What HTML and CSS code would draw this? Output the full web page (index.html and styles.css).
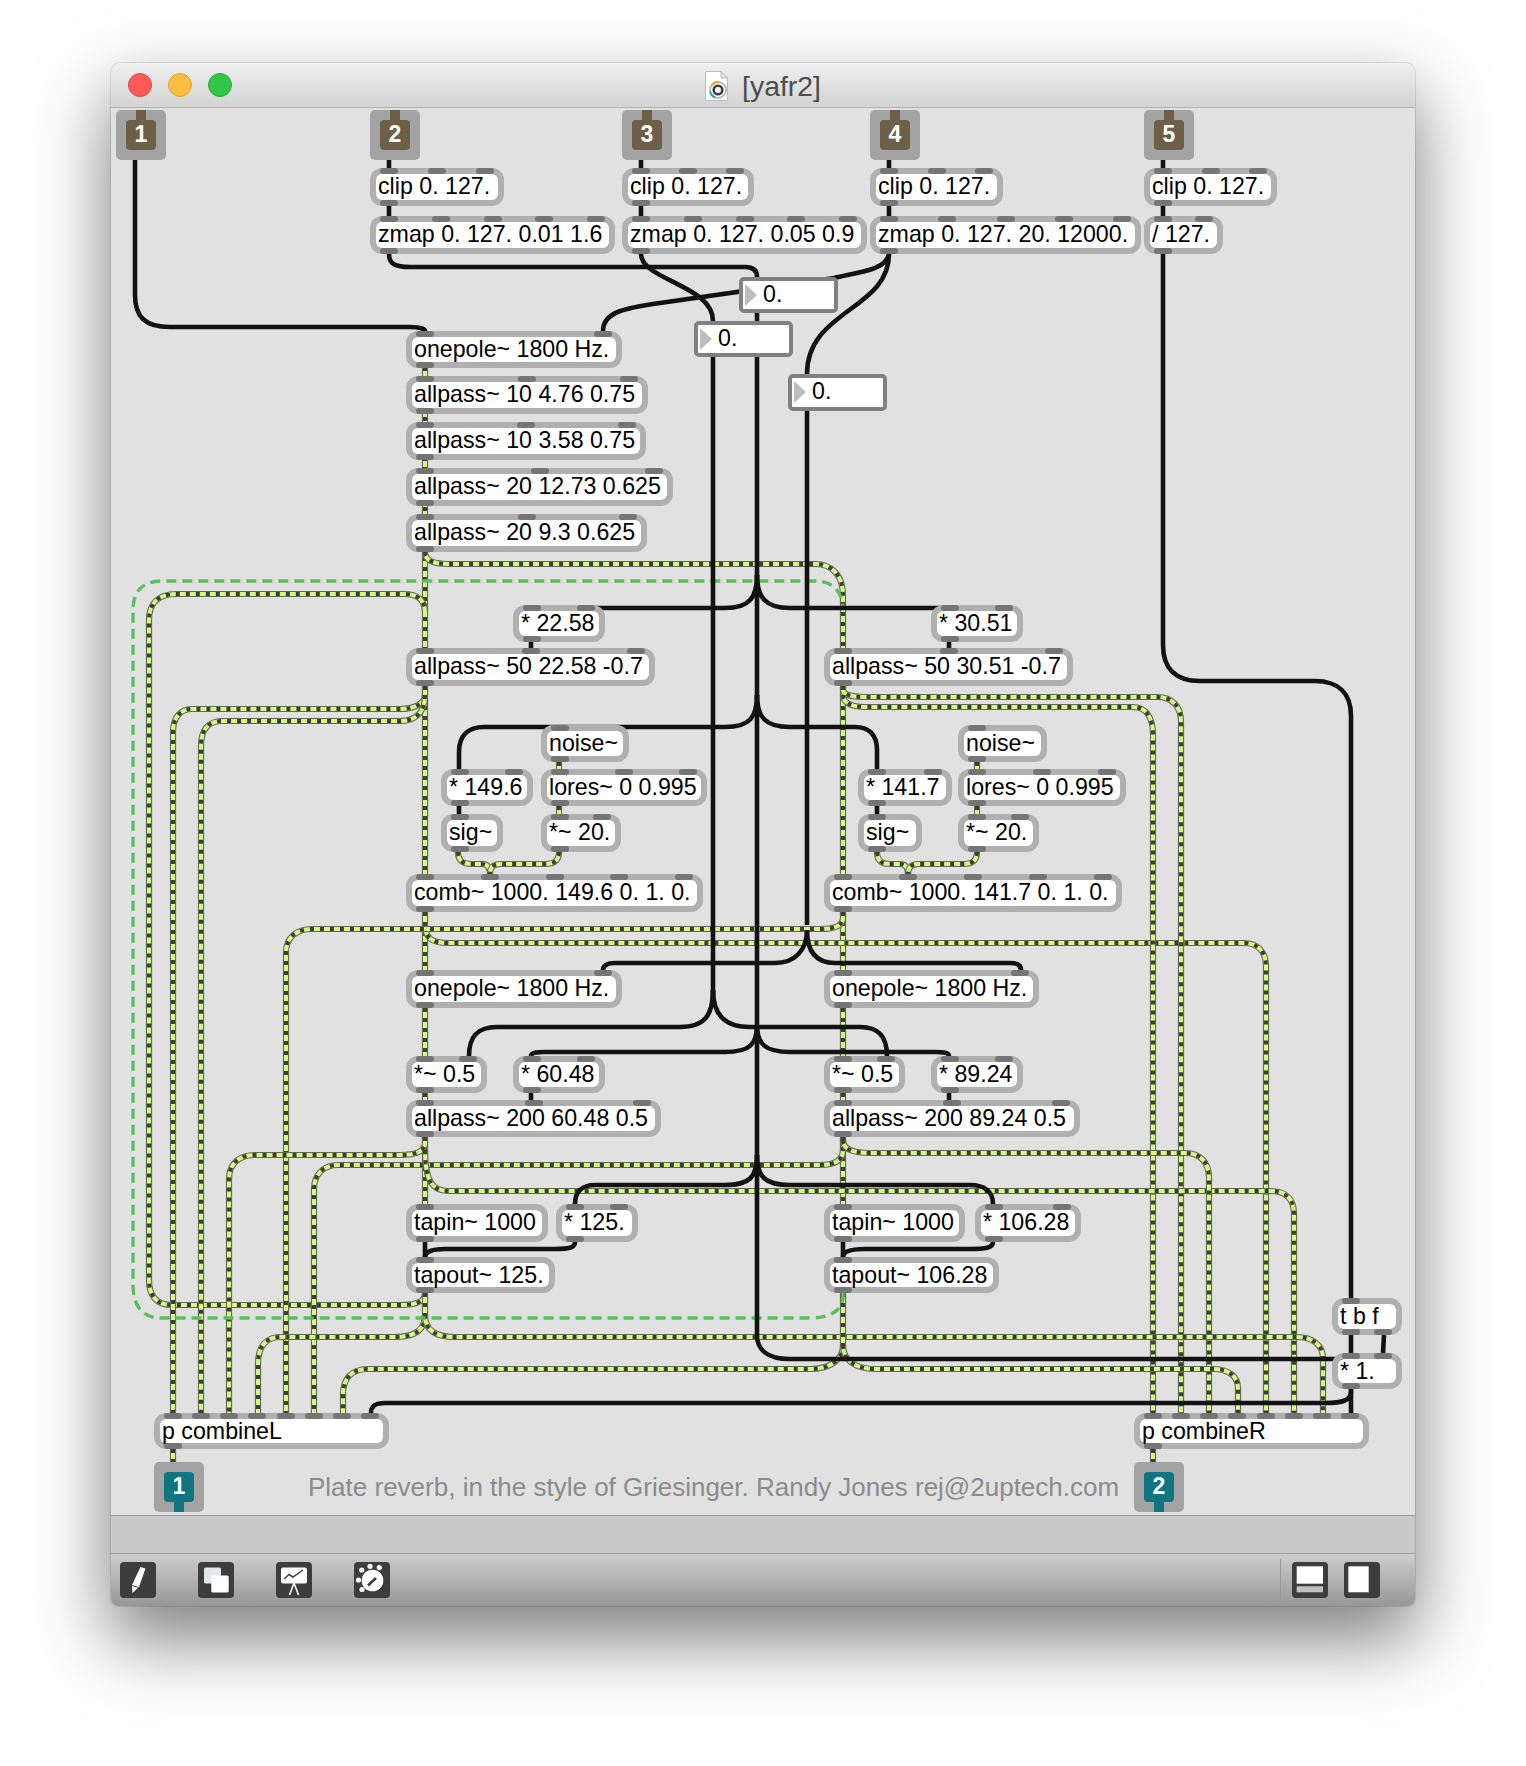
FILE: index.html
```html
<!DOCTYPE html>
<html lang="en">
<head>
    <meta charset="UTF-8">
    <title>[yafr2]</title>
    <link rel="stylesheet" href="styles.css">
</head>
<body>
    <div class="window">
        <div class="titlebar">
            <div class="lights">
                <span class="light red"></span>
                <span class="light yellow"></span>
                <span class="light green"></span>
            </div>
            <div class="title">
                <svg class="doc-icon" viewBox="0 0 23 30">
                    <path d="M.5.5H16L22.5 7V29.5H.5Z" fill="#fff" stroke="#bdbdbd"/>
                    <path d="M16 .5V7H22.5Z" fill="#e2e2e2" stroke="#bdbdbd"/>
                    <circle cx="13" cy="19" r="8" fill="none" stroke="#b8b8b8" stroke-width="1.800"/>
                    <path d="M6.500 14.500A8 8 0 0 1 14 11" fill="none" stroke="#eaa633" stroke-width="2"/>
                    <path d="M5.200 20.500A8 8 0 0 0 10 26.500" fill="none" stroke="#2f9fd0" stroke-width="2"/>
                    <circle cx="13" cy="19" r="4.300" fill="none" stroke="#3f3f3f" stroke-width="2.600"/>
                </svg>
                <span>[yafr2]</span>
            </div>
        </div>

        <div class="patcher" id="patcher">
            <svg class="cords" id="cords" viewBox="111 108 1304 1407"></svg>
            <div class="comment">Plate reverb, in the style of Griesinger. Randy Jones rej@2uptech.com</div>
        </div>

        <div class="statusbar"></div>

        <div class="toolbar">
            <svg class="tool" viewBox="0 0 36 36">
                <rect width="36" height="36" rx="4" fill="#3d3d3d"/>
                <path d="M20.500 5L25.500 6.500 19 25 12.500 31 12 23Z" fill="#fff"/>
                <path d="M12.300 23.500L18.800 25.500" stroke="#3d3d3d" stroke-width="1"/>
            </svg>
            <svg class="tool" viewBox="0 0 36 36">
                <rect width="36" height="36" rx="4" fill="#3d3d3d"/>
                <rect x="6" y="5.500" width="17" height="16" rx="1.500" fill="#e3e9e9"/>
                <rect x="13.300" y="13.500" width="17.400" height="17" rx="1.500" fill="#fff"/>
            </svg>
            <svg class="tool" viewBox="0 0 36 36">
                <rect width="36" height="36" rx="4" fill="#3d3d3d"/>
                <rect x="5" y="5.500" width="26" height="16" rx="2" fill="#fff"/>
                <path d="M8 17L13 12.500 17 15 27 8" fill="none" stroke="#3d3d3d" stroke-width="1.500"/>
                <path d="M18 21L13.500 33M18 21L22.500 33" stroke="#fff" stroke-width="1.600"/>
            </svg>
            <svg class="tool" viewBox="0 0 36 36">
                <rect width="36" height="36" rx="4" fill="#3d3d3d"/>
                <circle cx="18.500" cy="18.500" r="10.800" fill="#fff"/>
                <path d="M14 23.500L22 16" stroke="#3d3d3d" stroke-width="2.600"/>
                <circle cx="7.700" cy="8" r="2.600" fill="#fff"/>
                <circle cx="16" cy="4.300" r="2.600" fill="#fff"/>
                <circle cx="25.300" cy="5.600" r="2.600" fill="#fff"/>
                <circle cx="4.500" cy="18" r="2.600" fill="#fff"/>
                <circle cx="8" cy="27.500" r="2.600" fill="#fff"/>
            </svg>
            <span class="tool-sep"></span>
            <svg class="tool" viewBox="0 0 36 36">
                <rect width="36" height="36" rx="4" fill="#3d3d3d"/>
                <rect x="4.700" y="4.300" width="26.300" height="17.400" fill="#fff"/>
                <rect x="4.700" y="24.300" width="26.300" height="6" fill="#c2c2c2"/>
            </svg>
            <svg class="tool tool-last" viewBox="0 0 36 36">
                <rect width="36" height="36" rx="4" fill="#3d3d3d"/>
                <rect x="4.300" y="4.300" width="20.400" height="26" fill="#fff"/>
            </svg>
        </div>
    </div>

    <script src="patch.js"></script>
</body>
</html>
```

FILE: styles.css
```css
body {
    margin: 0;
    background-color: #ffffff;
    font-family: "Liberation Sans", Arial, sans-serif;
    color: #000000;
    height: 1766px;
    padding-top: 63px;
    padding-left: 111px;
    box-sizing: border-box;
    overflow: hidden;
}

.window {
    width: 1304px;
    height: 1543px;
    display: flex;
    flex-direction: column;
    border-radius: 10px 10px 7px 7px;
    box-shadow: 0 0 0 1px rgba(0, 0, 0, 0.1), 0 32px 72px 2px rgba(0, 0, 0, 0.5);
    overflow: hidden;
}

.titlebar {
    height: 45px;
    flex: none;
    box-sizing: border-box;
    display: grid;
    grid-template-columns: 1fr auto 1fr;
    align-items: center;
    background: linear-gradient(#f0f0f0, #d3d3d3);
    border-bottom: 1px solid #b1b1b1;
}

.lights {
    display: flex;
    gap: 16px;
    padding-left: 17px;
}

.light {
    width: 24px;
    height: 24px;
    border-radius: 50%;
    box-sizing: border-box;
}

.light.red { background-color: #fc5b57; border: 1px solid #e2463f; }
.light.yellow { background-color: #fdbc40; border: 1px solid #e0a028; }
.light.green { background-color: #33c748; border: 1px solid #27aa35; }

.title {
    display: flex;
    align-items: center;
    gap: 14px;
    font-size: 28.4px;
    color: #4c4c4c;
    padding-top: 2px;
}

.doc-icon {
    width: 23px;
    height: 30px;
}

.patcher {
    flex: none;
    height: 1407px;
    position: relative;
    background-color: #e1e1e1;
}

.cords {
    position: absolute;
    left: 0;
    top: 0;
    width: 1304px;
    height: 1407px;
    fill: none;
    stroke-linecap: butt;
}

.cord-black { stroke: #121212; stroke-width: 4.6; }
.sig-edge { stroke: #626b52; stroke-width: 6.2; }
.sig-fill { stroke: #d6f68a; stroke-width: 4; }
.sig-dash { stroke: #3d3f2e; stroke-width: 4; stroke-dasharray: 4 6; }
.cord-feedback { stroke: #58bf5c; stroke-width: 3.4; stroke-dasharray: 10 6; }

.obj {
    position: absolute;
    box-sizing: border-box;
    background-color: #ffffff;
    background-clip: padding-box;
    border: 6px solid #b0b0b0;
    border-radius: 12px;
    font-size: 23.2px;
    line-height: 24px;
    padding-left: 2px;
    white-space: nowrap;
}

.port {
    position: absolute;
    width: 18px;
    height: 6px;
    border-radius: 3px;
    background-color: #757575;
}

.port.in { top: -6px; }
.port.out { bottom: -6px; }

.num {
    position: absolute;
    box-sizing: border-box;
    background-color: #ffffff;
    border: 4px solid #808080;
    border-radius: 5px;
    font-size: 23.2px;
    line-height: 27px;
    padding-left: 20px;
}

.num::before {
    content: "";
    position: absolute;
    left: 2px;
    top: 3px;
    border-left: 12px solid #bdbdbd;
    border-top: 11px solid transparent;
    border-bottom: 11px solid transparent;
}

.io {
    position: absolute;
    box-sizing: border-box;
    width: 50px;
    height: 50px;
    border-radius: 5px;
    background-color: #a3a3a3;
    display: flex;
    align-items: center;
    justify-content: center;
}

.io-num {
    width: 30px;
    height: 30px;
    border-radius: 4px;
    position: relative;
    color: #ffffff;
    font-size: 23px;
    font-weight: bold;
    line-height: 29px;
    text-align: center;
}

.io-num::after {
    content: "";
    position: absolute;
    left: 10px;
    width: 10px;
    height: 10px;
    background-color: inherit;
}

.inlet .io-num { background-color: #6e5f48; }
.inlet .io-num::after { top: -10px; }
.outlet .io-num { background-color: #0f7580; }
.outlet .io-num::after { bottom: -10px; }

.comment {
    position: absolute;
    left: 197px;
    top: 1364px;
    font-size: 26px;
    line-height: 30px;
    color: #8b8b8b;
    white-space: nowrap;
}

.statusbar {
    height: 39px;
    flex: none;
    box-sizing: border-box;
    background-color: #c9c9c9;
    border-top: 1px solid #9c9c9c;
    border-bottom: 1px solid #9c9c9c;
}

.toolbar {
    flex: 1;
    display: flex;
    align-items: center;
    gap: 42px;
    padding-left: 9px;
    padding-bottom: 1px;
    background: linear-gradient(#cdcdcd, #979797);
}

.tool {
    width: 36px;
    height: 36px;
    flex: none;
}

.tool-sep {
    width: 1px;
    height: 42px;
    margin-left: auto;
    margin-right: -31px;
    background-color: #9a9a9a;
}

.tool + .tool-last {
    margin-left: -26px;
    margin-right: 35px;
}
```

FILE: patch.js
```js
// patcher data, all coordinates are page pixels
const ORIGIN_X = 111;
const ORIGIN_Y = 108;

// text, left, top, right, bottom, inlets, outlets
const objects = [
    ["clip 0. 127.", 370, 168, 504, 206, 3, 1],
    ["zmap 0. 127. 0.01 1.6", 370, 216, 615, 254, 5, 1],
    ["clip 0. 127.", 622, 168, 754, 206, 3, 1],
    ["zmap 0. 127. 0.05 0.9", 622, 216, 867, 254, 5, 1],
    ["clip 0. 127.", 870, 168, 1003, 206, 3, 1],
    ["zmap 0. 127. 20. 12000.", 870, 216, 1141, 254, 5, 1],
    ["clip 0. 127.", 1144, 168, 1277, 206, 3, 1],
    ["/ 127.", 1144, 216, 1223, 254, 2, 1],
    ["onepole~ 1800 Hz.", 406, 331, 622, 368, 2, 1],
    ["allpass~ 10 4.76 0.75", 406, 376, 648, 414, 3, 1],
    ["allpass~ 10 3.58 0.75", 406, 422, 646, 460, 3, 1],
    ["allpass~ 20 12.73 0.625", 406, 468, 673, 506, 3, 1],
    ["allpass~ 20 9.3 0.625", 406, 514, 647, 552, 3, 1],
    ["* 22.58", 513, 605, 605, 642, 2, 1],
    ["allpass~ 50 22.58 -0.7", 406, 648, 655, 686, 3, 1],
    ["noise~", 541, 725, 629, 762, 1, 1],
    ["* 149.6", 441, 769, 533, 806, 2, 1],
    ["lores~ 0 0.995", 541, 769, 707, 806, 3, 1],
    ["sig~", 441, 814, 503, 852, 1, 1],
    ["*~ 20.", 541, 814, 621, 852, 2, 1],
    ["comb~ 1000. 149.6 0. 1. 0.", 406, 874, 703, 912, 5, 1],
    ["* 30.51", 931, 605, 1023, 642, 2, 1],
    ["allpass~ 50 30.51 -0.7", 824, 648, 1073, 686, 3, 1],
    ["noise~", 958, 725, 1047, 762, 1, 1],
    ["* 141.7", 858, 769, 952, 806, 2, 1],
    ["lores~ 0 0.995", 958, 769, 1126, 806, 3, 1],
    ["sig~", 858, 814, 922, 852, 1, 1],
    ["*~ 20.", 958, 814, 1039, 852, 2, 1],
    ["comb~ 1000. 141.7 0. 1. 0.", 824, 874, 1122, 912, 5, 1],
    ["onepole~ 1800 Hz.", 406, 970, 622, 1008, 2, 1],
    ["*~ 0.5", 406, 1056, 487, 1093, 2, 1],
    ["* 60.48", 513, 1056, 605, 1093, 2, 1],
    ["allpass~ 200 60.48 0.5", 406, 1100, 661, 1137, 3, 1],
    ["tapin~ 1000", 406, 1204, 548, 1242, 1, 1],
    ["* 125.", 556, 1204, 638, 1242, 2, 1],
    ["tapout~ 125.", 406, 1257, 555, 1293, 1, 1],
    ["onepole~ 1800 Hz.", 824, 970, 1039, 1008, 2, 1],
    ["*~ 0.5", 824, 1056, 905, 1093, 2, 1],
    ["* 89.24", 931, 1056, 1023, 1093, 2, 1],
    ["allpass~ 200 89.24 0.5", 824, 1100, 1080, 1137, 3, 1],
    ["tapin~ 1000", 824, 1204, 965, 1242, 1, 1],
    ["* 106.28", 975, 1204, 1081, 1242, 2, 1],
    ["tapout~ 106.28", 824, 1257, 999, 1293, 1, 1],
    ["t b f", 1332, 1298, 1402, 1335, 1, 2],
    ["* 1.", 1332, 1353, 1402, 1389, 2, 1],
    ["p combineL", 154, 1413, 389, 1449, 8, 1],
    ["p combineR", 1134, 1413, 1369, 1449, 8, 1]
];

const numbers = [
    [739, 277, 838, 313],
    [694, 321, 793, 357],
    [788, 374, 887, 411]
];

const inlets = [[116, "1"], [370, "2"], [622, "3"], [870, "4"], [1144, "5"]];
const outlets = [[154, "1"], [1134, "2"]];

const signalCords = [
    "M425 367V648", "M425 686V874", "M425 912V970", "M425 1008V1056", "M425 1093V1100", "M425 1137V1204",
    "M843 686V874", "M843 912V970", "M843 1008V1056", "M843 1093V1100", "M843 1137V1204",
    "M425 552C425 560 432 564 448 564H815C833 564 843 576 843 596V648",
    "M425 1293C425 1300 420 1305 400 1305H172C156 1305 149 1295 149 1280V620C149 604 158 594 176 594H404C417 594 425 600 425 612",
    "M425 686V695C425 703 415 709 400 709H192C180 709 173 718 173 732V1413",
    "M425 695C425 713 415 721 400 721H222C208 721 201 730 201 746V1413",
    "M559 762V769", "M559 806V814", "M977 762V769", "M977 806V814",
    "M458 852C458 860 462 864 472 864H482C488 864 490 868 490 874",
    "M559 852C559 860 555 864 545 864H500C493 864 490 868 490 874",
    "M877 852C877 860 881 864 890 864H900C906 864 908 868 908 874",
    "M977 852C977 860 973 864 963 864H918C911 864 908 868 908 874",
    "M425 925C425 938 432 943 448 943H1244C1258 943 1266 952 1266 966V1413",
    "M843 912V918C843 925 835 929 820 929H312C296 929 286 938 286 952V1413",
    "M843 686V690C843 694 850 697 865 697H1157C1172 697 1181 706 1181 722V1413",
    "M843 695C843 702 850 707 865 707H1133C1145 707 1153 716 1153 735V1413",
    "M425 1137V1143C425 1150 418 1155 400 1155H255C240 1155 229 1163 229 1179V1413",
    "M843 1137V1150C843 1160 835 1165 820 1165H338C324 1165 314 1174 314 1189V1413",
    "M425 1150C425 1180 432 1191 448 1191H1270C1285 1191 1294 1198 1294 1214V1413",
    "M843 1140C843 1148 850 1153 870 1153H1185C1200 1153 1209 1162 1209 1178V1413",
    "M425 1293V1315C425 1330 415 1337 395 1337H281C266 1337 258 1346 258 1364V1413",
    "M425 1315C425 1330 435 1337 455 1337H1297C1312 1337 1323 1345 1323 1358V1413",
    "M843 1293V1345C843 1360 830 1369 810 1369H368C352 1369 343 1378 343 1395V1413",
    "M843 1345C843 1360 855 1369 875 1369H1213C1228 1369 1238 1376 1238 1388V1413",
    "M173 1449V1462", "M1153 1449V1462"
];

const blackCords = [
    "M135 160V295C135 317 145 327 170 327H410C420 327 425 329 425 331",
    "M389 160V216", "M641 160V216", "M889 160V216", "M1163 160V216",
    "M389 254C389 264 395 267 410 267H745C753 267 757 270 757 277",
    "M641 254C641 280 713 285 713 321",
    "M889 254C886 270 860 272 834 278L660 303C625 308 603 312 603 331",
    "M889 254C889 310 807 310 807 374",
    "M757 313V1335C757 1350 768 1359 790 1359H1345",
    "M713 357V1000",
    "M713 990C713 1015 705 1027 680 1027H497C478 1027 469 1036 469 1056",
    "M713 990C713 1015 725 1027 750 1027H860C878 1027 887 1036 887 1056",
    "M807 411V925",
    "M807 930C807 950 795 963 775 963H615C607 963 603 966 603 970",
    "M807 930C807 950 815 963 835 963H1010C1018 963 1021 966 1021 970",
    "M757 575C757 597 750 608 725 608H590",
    "M757 575C757 597 765 608 790 608H950",
    "M757 695C757 717 750 727 725 727H484C468 727 459 736 459 752V769",
    "M757 695C757 717 765 727 790 727H855C868 727 877 734 877 750V769",
    "M757 1025C757 1044 750 1052 725 1052H545C535 1052 531 1053 531 1056",
    "M757 1025C757 1044 765 1052 790 1052H935C945 1052 949 1053 949 1056",
    "M757 1155C757 1177 750 1185 725 1185H595C582 1185 575 1192 575 1204",
    "M757 1155C757 1177 765 1185 790 1185H970C985 1185 993 1192 993 1204",
    "M531 642V648", "M949 642V648", "M459 806V814", "M877 806V814",
    "M531 1093V1100", "M949 1093V1100", "M425 1242V1257", "M843 1242V1257",
    "M575 1242C575 1248 568 1249 555 1249H445C432 1249 425 1252 425 1257",
    "M993 1242C993 1248 985 1249 970 1249H865C850 1249 843 1252 843 1257",
    "M1163 254V645C1163 668 1175 681 1200 681H1315C1338 681 1351 693 1351 716V1298",
    "M1351 1335V1353", "M1384 1335L1383 1353", "M1351 1389V1413",
    "M1351 1389V1392C1351 1400 1343 1403 1325 1403H385C375 1403 371 1406 371 1413"
];

const feedbackCord = "M843 1293V1297C843 1310 830 1318 810 1318H160C142 1318 133 1305 133 1285V610C133 592 142 581 162 581H815C833 581 843 592 843 610";

function addPath(d, className) {
    let path = document.createElementNS("http://www.w3.org/2000/svg", "path");
    path.setAttribute("d", d);
    path.setAttribute("class", className);
    document.getElementById("cords").appendChild(path);
}

function place(el, x, y, w, h) {
    el.style.left = (x - ORIGIN_X) + "px";
    el.style.top = (y - ORIGIN_Y) + "px";
    if (w) {
        el.style.width = w + "px";
        el.style.height = h + "px";
    }
}

function addPorts(box, width, count, side) {
    let step = count > 1 ? (width - 38) / (count - 1) : 0;
    for (let i = 0; i < count; i++) {
        let port = document.createElement("span");
        port.className = "port " + side;
        port.style.left = (4 + i * step) + "px";
        box.appendChild(port);
    }
}

function addIo(patcher, x, y, label, kind) {
    let io = document.createElement("div");
    io.className = "io " + kind;
    place(io, x, y);
    let num = document.createElement("div");
    num.className = "io-num";
    num.innerText = label;
    io.appendChild(num);
    patcher.appendChild(io);
}

function buildPatcher() {
    let patcher = document.getElementById("patcher");

    signalCords.forEach(d => {
        addPath(d, "sig-edge");
        addPath(d, "sig-fill");
        addPath(d, "sig-dash");
    });
    addPath(feedbackCord, "cord-feedback");
    blackCords.forEach(d => addPath(d, "cord-black"));

    objects.forEach(([text, x1, y1, x2, y2, ins, outs]) => {
        let box = document.createElement("div");
        box.className = "obj";
        box.innerText = text;
        place(box, x1, y1, x2 - x1, y2 - y1);
        addPorts(box, x2 - x1, ins, "in");
        addPorts(box, outs > 1 ? 70 : x2 - x1, outs, "out");
        patcher.appendChild(box);
    });

    numbers.forEach(([x1, y1, x2, y2]) => {
        let box = document.createElement("div");
        box.className = "num";
        box.innerText = "0.";
        place(box, x1, y1, x2 - x1, y2 - y1);
        patcher.appendChild(box);
    });

    inlets.forEach(([x, label]) => addIo(patcher, x, 110, label, "inlet"));
    outlets.forEach(([x, label]) => addIo(patcher, x, 1462, label, "outlet"));
}

buildPatcher();
```
